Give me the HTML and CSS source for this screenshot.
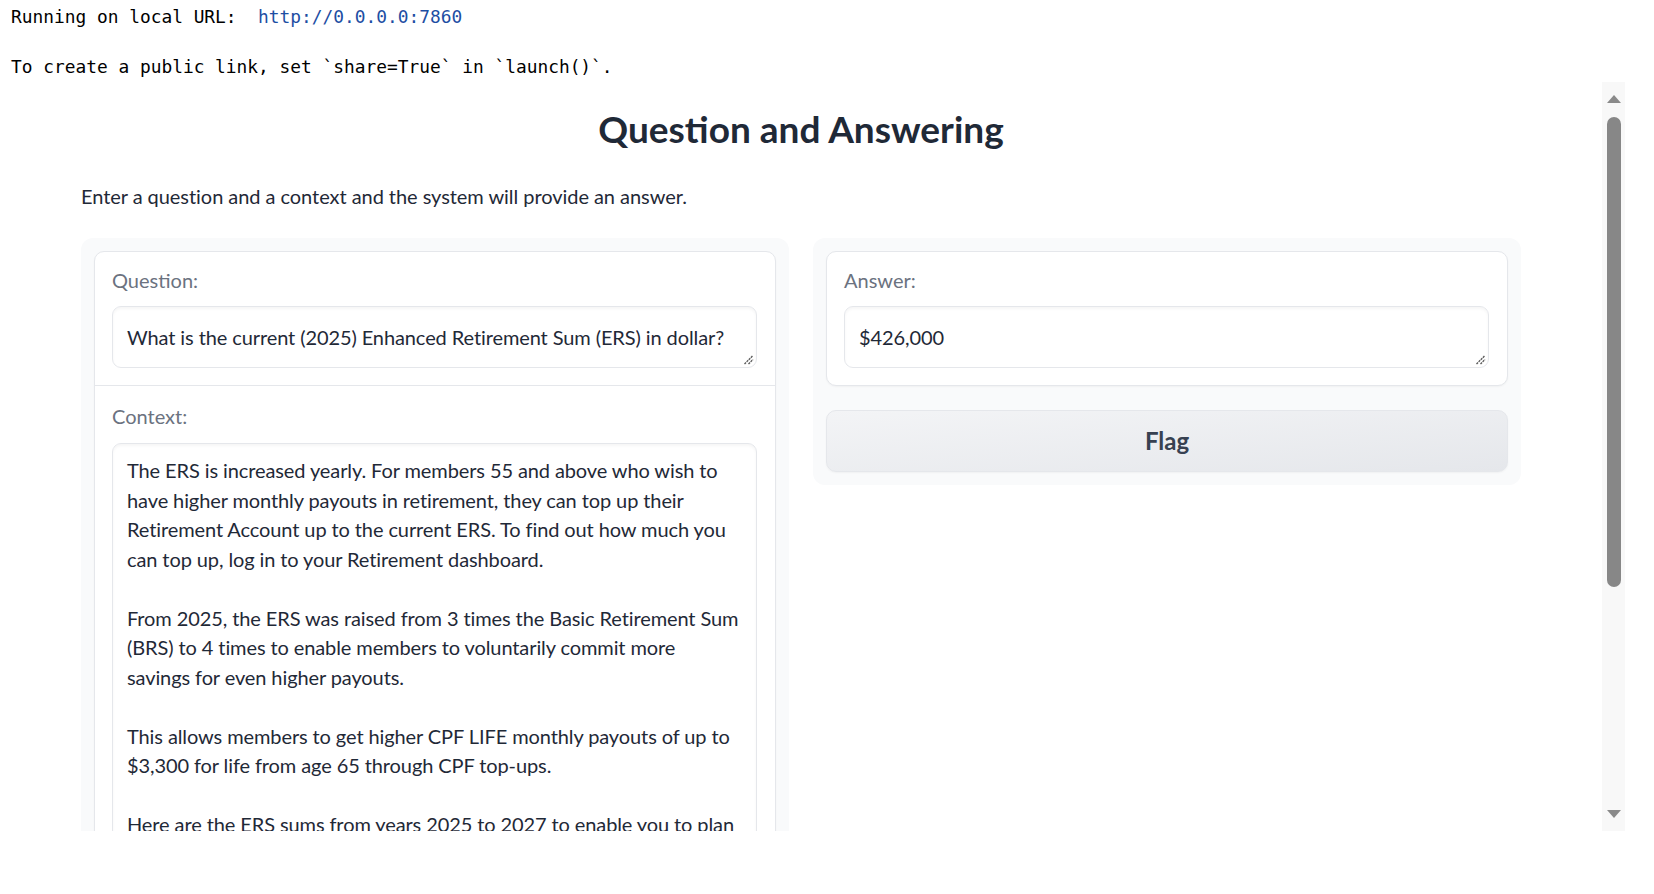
FILE: index.html
```html
<!DOCTYPE html>
<html lang="en">
<head>
<meta charset="utf-8">
<title>Question and Answering</title>
<link rel="stylesheet" href="styles.css">
</head>
<body>
<div class="console">
  <div class="cline">Running on local URL:&nbsp; <span class="url">http://0.0.0.0:7860</span></div>
  <div class="cline">&nbsp;</div>
  <div class="cline">To create a public link, set `share=True` in `launch()`.</div>
</div>
<div class="frame">
  <div class="viewport">
    <div class="app">
      <h1 class="title">Question and Answering</h1>
      <p class="desc">Enter a question and a context and the system will provide an answer.</p>
      <div class="row">
        <div class="panel">
          <div class="card">
            <div class="block">
              <div class="label">Question:</div>
              <div class="textbox">
                <div class="tline">What is the current (2025) Enhanced Retirement Sum (ERS) in dollar?</div>
                <svg class="grip" width="11" height="11" viewBox="0 0 11 11"><path d="M1.5 10 L10 1.5 M5.5 10 L10 5.5" stroke="#5a5a5a" stroke-width="1.4" stroke-dasharray="2.2 0.8"/></svg>
              </div>
            </div>
            <div class="block block-context">
              <div class="label">Context:</div>
              <div class="textbox textbox-long">
                <div class="tline">The ERS is increased yearly. For members 55 and above who wish to</div>
                <div class="tline">have higher monthly payouts in retirement, they can top up their</div>
                <div class="tline">Retirement Account up to the current ERS. To find out how much you</div>
                <div class="tline">can top up, log in to your Retirement dashboard.</div>
                <div class="tline">&nbsp;</div>
                <div class="tline">From 2025, the ERS was raised from 3 times the Basic Retirement Sum</div>
                <div class="tline">(BRS) to 4 times to enable members to voluntarily commit more</div>
                <div class="tline">savings for even higher payouts.</div>
                <div class="tline">&nbsp;</div>
                <div class="tline">This allows members to get higher CPF LIFE monthly payouts of up to</div>
                <div class="tline">$3,300 for life from age 65 through CPF top-ups.</div>
                <div class="tline">&nbsp;</div>
                <div class="tline">Here are the ERS sums from years 2025 to 2027 to enable you to plan</div>
              </div>
            </div>
          </div>
        </div>
        <div class="panel panel-right">
          <div class="card">
            <div class="block">
              <div class="label">Answer:</div>
              <div class="textbox">
                <div class="tline">$426,000</div>
                <svg class="grip" width="11" height="11" viewBox="0 0 11 11"><path d="M1.5 10 L10 1.5 M5.5 10 L10 5.5" stroke="#5a5a5a" stroke-width="1.4" stroke-dasharray="2.2 0.8"/></svg>
              </div>
            </div>
          </div>
          <button class="flag">Flag</button>
        </div>
      </div>
    </div>
  </div>
  <div class="scrollbar">
    <div class="arrow arrow-up"></div>
    <div class="thumb"></div>
    <div class="track-space"></div>
    <div class="arrow arrow-down"></div>
  </div>
</div>
</body>
</html>
```

FILE: styles.css
```css
html, body {
  margin: 0;
  padding: 0;
  background: #ffffff;
}

.console {
  font-family: "DejaVu Sans Mono", "Liberation Mono", monospace;
  font-size: 17.85px;
  line-height: 25px;
  color: #000000;
  padding: 4px 0 0 11px;
  height: 82px;
  box-sizing: border-box;
}

.cline {
  white-space: pre;
}

.url {
  color: #1d4ea3;
}

.frame {
  display: flex;
  width: 1625px;
  height: 749px;
  overflow: hidden;
}

.viewport {
  width: 1602px;
  height: 100%;
  overflow: hidden;
}

.app {
  padding: 25px 81px 0 81px;
  font-family: "Lato", "Noto Sans", sans-serif;
  color: #1f2937;
}

.title {
  margin: 0;
  text-align: center;
  font-size: 37px;
  line-height: 44px;
  font-weight: 700;
  color: #1f2937;
}

.desc {
  margin: 30px 0 0 0;
  font-size: 20px;
  line-height: 30px;
  color: #1f2937;
  letter-spacing: -0.05px;
}

.row {
  display: flex;
  gap: 24px;
  margin-top: 27px;
  align-items: flex-start;
}

.panel {
  flex: 1 1 0;
  background: #f9fafb;
  border-radius: 12px;
  padding: 13px;
  display: flex;
  flex-direction: column;
}

.card {
  background: #ffffff;
  border: 1px solid #e5e7eb;
  border-radius: 10px;
  overflow: hidden;
  box-shadow: 0 1px 2px rgba(0, 0, 0, 0.04);
}

.block {
  padding: 15px 18px 17px 17px;
}

.block-context {
  border-top: 1px solid #e5e7eb;
  padding-top: 17px;
  padding-bottom: 0;
}

.label {
  font-size: 20px;
  line-height: 26px;
  color: #6b7280;
  margin-bottom: 13px;
}

.block-context .label {
  margin-bottom: 14px;
}

.textbox {
  position: relative;
  border: 1px solid #e5e7eb;
  border-radius: 9px;
  padding: 16px 14px 14.5px 14px;
  box-shadow: inset 0 2px 3px rgba(0, 0, 0, 0.04);
  font-size: 20px;
  line-height: 29.45px;
  color: #1f2937;
  background: #ffffff;
  letter-spacing: -0.1px;
}

.textbox-long {
  padding-top: 12.5px;
}

.tline {
  white-space: nowrap;
}

.grip {
  position: absolute;
  right: 2px;
  bottom: 2px;
}

.flag {
  margin-top: 24px;
  height: 62px;
  border: 1px solid #e5e7eb;
  border-radius: 10px;
  background: linear-gradient(to bottom right, #f3f4f6, #e5e7eb);
  font-family: "Lato", "Noto Sans", sans-serif;
  font-size: 24px;
  font-weight: 700;
  color: #374151;
  box-shadow: 0 1px 2px rgba(0, 0, 0, 0.04);
}

.scrollbar {
  width: 23px;
  height: 100%;
  background: #f8f8f8;
  display: flex;
  flex-direction: column;
  align-items: center;
}

.arrow {
  width: 0;
  height: 0;
  border-left: 7px solid transparent;
  border-right: 7px solid transparent;
}

.arrow-up {
  margin-top: 13px;
  border-bottom: 8px solid #8a8a8a;
}

.arrow-down {
  margin-bottom: 13px;
  border-top: 8px solid #8a8a8a;
}

.thumb {
  margin-top: 14px;
  width: 14px;
  height: 470px;
  border-radius: 7px;
  background: #878787;
}

.track-space {
  flex: 1;
}
```
